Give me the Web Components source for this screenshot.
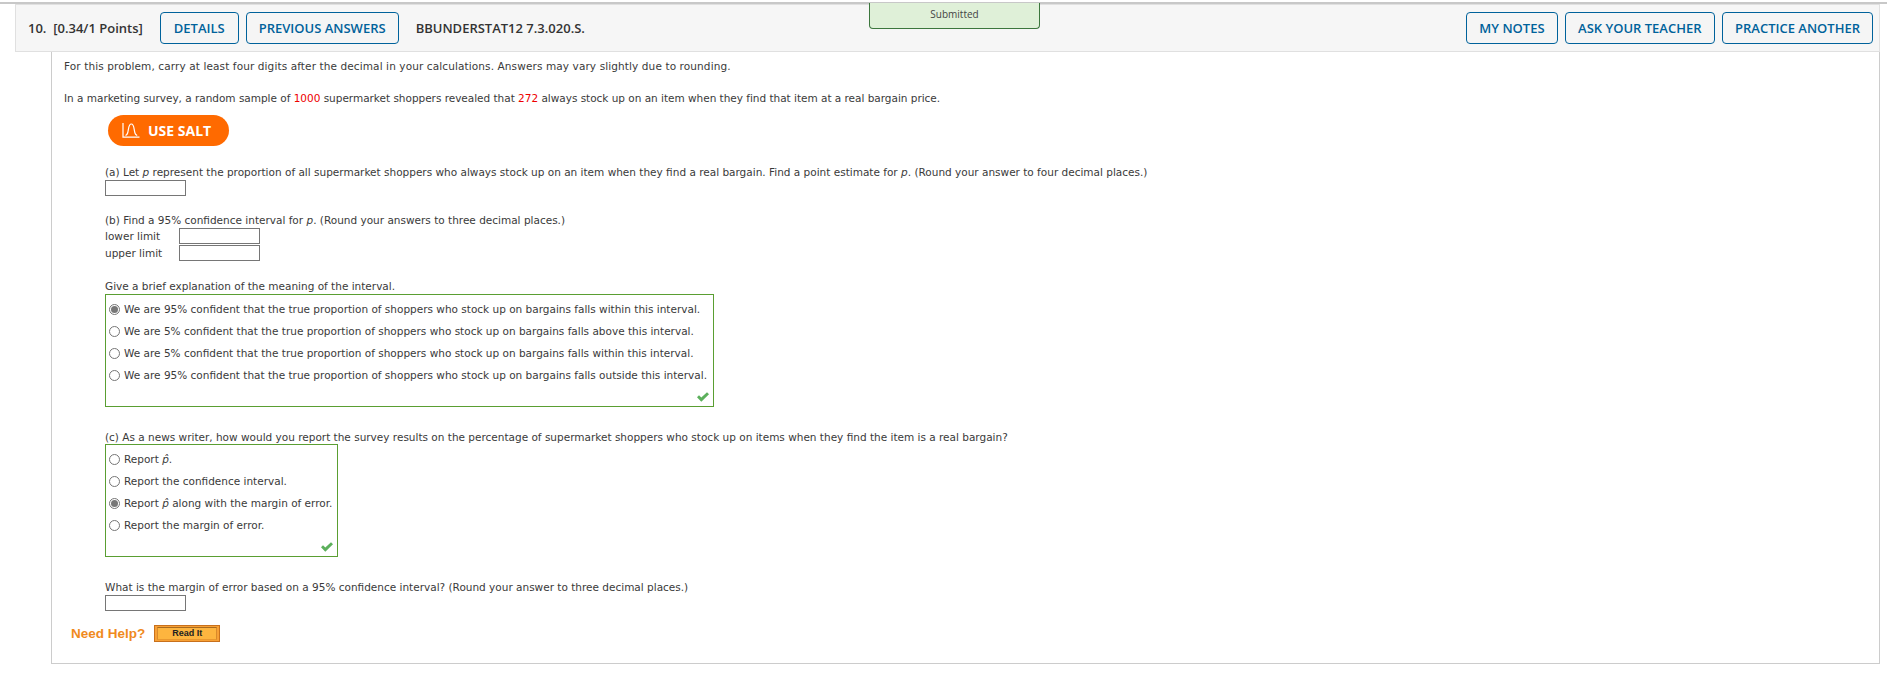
<!DOCTYPE html>
<html><head><meta charset="utf-8"><title>Question</title>
<style>
html,body{margin:0;padding:0;background:#fff}
body{width:1887px;height:676px;overflow:hidden;font:10.5px/12px "DejaVu Sans",sans-serif;color:#3a3a3a}
</style></head><body>
<template id="t-btn"><style>
:host{display:inline-flex;align-items:center;justify-content:center;box-sizing:border-box;height:32px;padding:0 12px;border:1px solid #00629b;border-radius:4px;color:#00629b;font:600 13px/1 "Open Sans",sans-serif;background:#f5f5f5;white-space:nowrap}
:host([wide]){padding:0 13px}
</style><slot></slot></template>
<template id="t-header"><style>
:host{display:flex;align-items:center;box-sizing:border-box;height:48px;margin:0 7px 0 15px;background:#f6f6f6;border:1px solid #e0e0e0;padding:0 6px 0 12px;font:600 13px/1 "Open Sans",sans-serif;color:#333;position:relative;white-space:nowrap}
.pts{margin-right:17px}.code{margin-left:17px}
.sp{flex:1}.right{display:flex;gap:7.500px}.left{display:flex;gap:7px}
</style><span class="pts">10.&nbsp; [0.34/1 Points]</span><div class="left"><slot name="left"></slot></div><span class="code"><slot name="code"></slot></span><span class="sp"></span><div class="right"><slot name="right"></slot></div><slot name="over"></slot></template>
<template id="t-pill"><style>
:host{position:absolute;left:853px;top:-2px;width:171px;height:26px;box-sizing:border-box;background:#dff0d8;border:1px solid #3c763d;border-top:none;border-radius:0 0 4px 4px;display:flex;justify-content:center;align-items:center;padding-bottom:4px;font:400 10px/12px "Open Sans",sans-serif;color:#444}
</style><slot></slot></template>
<template id="t-body"><style>
:host{display:block;box-sizing:border-box;margin:0 7px 0 51px;height:612px;border:1px solid #ccc;border-top:none;padding:8px 0 0 12px}
</style><slot></slot></template>
<template id="t-para"><style>
:host{display:block;margin-bottom:20px;height:12px;white-space:nowrap}
:host([ind]){margin-left:41px}
</style><slot></slot></template>
<template id="t-salt"><style>
:host{display:flex;align-items:center;gap:8px;box-sizing:border-box;width:121px;height:31px;margin:-9px 0 20px 44px;padding-left:14px;border-radius:16px;background:#ff6a00;color:#fff;font:700 14px/1 "Open Sans",sans-serif}
svg{display:block}
</style><svg width="18" height="15" viewBox="0 0 18 15" fill="none" stroke="#fff" stroke-width="1.200"><path d="M1 0v14.200h16.500"/><path d="M3.500 12.300c2.200 0 2.400-2.500 2.900-6C6.900 2.800 7.300 1 9.300 1s2.400 1.800 2.900 5.300c.5 3.500.7 6 3 6"/></svg><slot></slot></template>
<template id="t-input"><style>
:host{display:block;box-sizing:border-box;width:81px;height:16px;border:1px solid #767676;background:#fff}
</style></template>
<template id="t-lim"><style>
:host{display:flex;align-items:center;height:16px;margin-bottom:1px;margin-left:41px}
.l{width:74px}
</style><span class="l"><slot></slot></span><slot name="f"></slot></template>
<template id="t-box"><style>
:host{display:block;box-sizing:border-box;margin-left:41px;border:1px solid #5a9e32;position:relative;padding:3px 0 0 1px;height:113px}
svg{position:absolute;right:4px;bottom:4px}
</style><slot></slot><svg width="12" height="10" viewBox="0 0 12 10"><path d="M0 5.300 2 3.300 4.300 5.500 10 .2 12 2.200 4.300 9.800z" fill="#5cb05c"/></svg></template>
<template id="t-choice"><style>
:host{display:flex;align-items:center;height:22px;white-space:nowrap}
.r{width:11px;height:11px;box-sizing:border-box;border:1px solid #767676;border-radius:50%;margin:0 4px 0 2px;background:#fff;display:flex;align-items:center;justify-content:center;flex:none}
:host([on]) .r::after{content:"";width:7px;height:7px;border-radius:50%;background:#777}
</style><span class="r"></span><span><slot></slot></span></template>
<template id="t-help"><style>
:host{display:flex;align-items:center;gap:9px;margin:14px 0 0 7px;font:700 13.500px/1 "Liberation Sans",sans-serif;color:#f08a1d}
.b{box-sizing:border-box;width:66px;height:17px;border:1px solid #c8701c;background:#f7a035;padding:1px 2px;display:flex}
.i{flex:1;background:#fdb53f;border:1px solid #d98a2b;border-top-color:#a96a1f;border-bottom-color:#e9982f;display:flex;align-items:center;justify-content:center;font:700 9px/1 "Liberation Sans",sans-serif;color:#222}
</style><span><slot></slot></span><span class="b"><span class="i"><slot name="b"></slot></span></span></template>
<template id="t-topline"><style>:host{display:block;height:4px;box-sizing:border-box;padding-top:2px}div{height:2px;background:#c8c8c8}</style><div></div></template>

<top-line></top-line>
<q-header>
 <q-btn slot="left" wide>DETAILS</q-btn><q-btn slot="left">PREVIOUS ANSWERS</q-btn>
 <span slot="code">BBUNDERSTAT12 7.3.020.S.</span>
 <q-btn slot="right">MY NOTES</q-btn><q-btn slot="right">ASK YOUR TEACHER</q-btn><q-btn slot="right">PRACTICE ANOTHER</q-btn>
 <sub-pill slot="over">Submitted</sub-pill>
</q-header>
<q-body>
 <q-para style="letter-spacing:.11px">For this problem, carry at least four digits after the decimal in your calculations. Answers may vary slightly due to rounding.</q-para>
 <q-para style="letter-spacing:-.02px">In a marketing survey, a random sample of <span style="color:#e00">1000</span> supermarket shoppers revealed that <span style="color:#e00">272</span> always stock up on an item when they find that item at a real bargain price.</q-para>
 <salt-btn>USE SALT</salt-btn>
 <q-para ind style="margin-bottom:2px">(a) Let <i>p</i> represent the proportion of all supermarket shoppers who always stock up on an item when they find a real bargain. Find a point estimate for <i>p</i>. (Round your answer to four decimal places.)</q-para>
 <q-input style="margin-left:41px;margin-bottom:18px"></q-input>
 <q-para ind style="margin-bottom:2px">(b) Find a 95% confidence interval for <i>p</i>. (Round your answers to three decimal places.)</q-para>
 <q-lim>lower limit<q-input slot="f"></q-input></q-lim>
 <q-lim style="margin-bottom:19px">upper limit<q-input slot="f"></q-input></q-lim>
 <q-para ind style="margin-bottom:2px">Give a brief explanation of the meaning of the interval.</q-para>
 <q-box style="width:609px">
  <q-choice on>We are 95% confident that the true proportion of shoppers who stock up on bargains falls within this interval.</q-choice>
  <q-choice>We are 5% confident that the true proportion of shoppers who stock up on bargains falls above this interval.</q-choice>
  <q-choice>We are 5% confident that the true proportion of shoppers who stock up on bargains falls within this interval.</q-choice>
  <q-choice>We are 95% confident that the true proportion of shoppers who stock up on bargains falls outside this interval.</q-choice>
 </q-box>
 <q-para ind style="margin:24px 0 1px 41px">(c) As a news writer, how would you report the survey results on the percentage of supermarket shoppers who stock up on items when they find the item is a real bargain?</q-para>
 <q-box style="width:233px">
  <q-choice>Report <i>p̂</i>.</q-choice>
  <q-choice>Report the confidence interval.</q-choice>
  <q-choice on>Report <i>p̂</i> along with the margin of error.</q-choice>
  <q-choice>Report the margin of error.</q-choice>
 </q-box>
 <q-para ind style="margin:24px 0 2px 41px">What is the margin of error based on a 95% confidence interval? (Round your answer to three decimal places.)</q-para>
 <q-input style="margin-left:41px"></q-input>
 <q-help>Need Help?<span slot="b">Read It</span></q-help>
</q-body>
<script>
const defs={'q-btn':'t-btn','q-header':'t-header','sub-pill':'t-pill','q-body':'t-body','q-para':'t-para','salt-btn':'t-salt','q-input':'t-input','q-lim':'t-lim','q-box':'t-box','q-choice':'t-choice','q-help':'t-help','top-line':'t-topline'};
for(const [n,t] of Object.entries(defs)){
 customElements.define(n,class extends HTMLElement{constructor(){super();this.attachShadow({mode:'open'}).appendChild(document.getElementById(t).content.cloneNode(true));}});
}
</script>
</body></html>
